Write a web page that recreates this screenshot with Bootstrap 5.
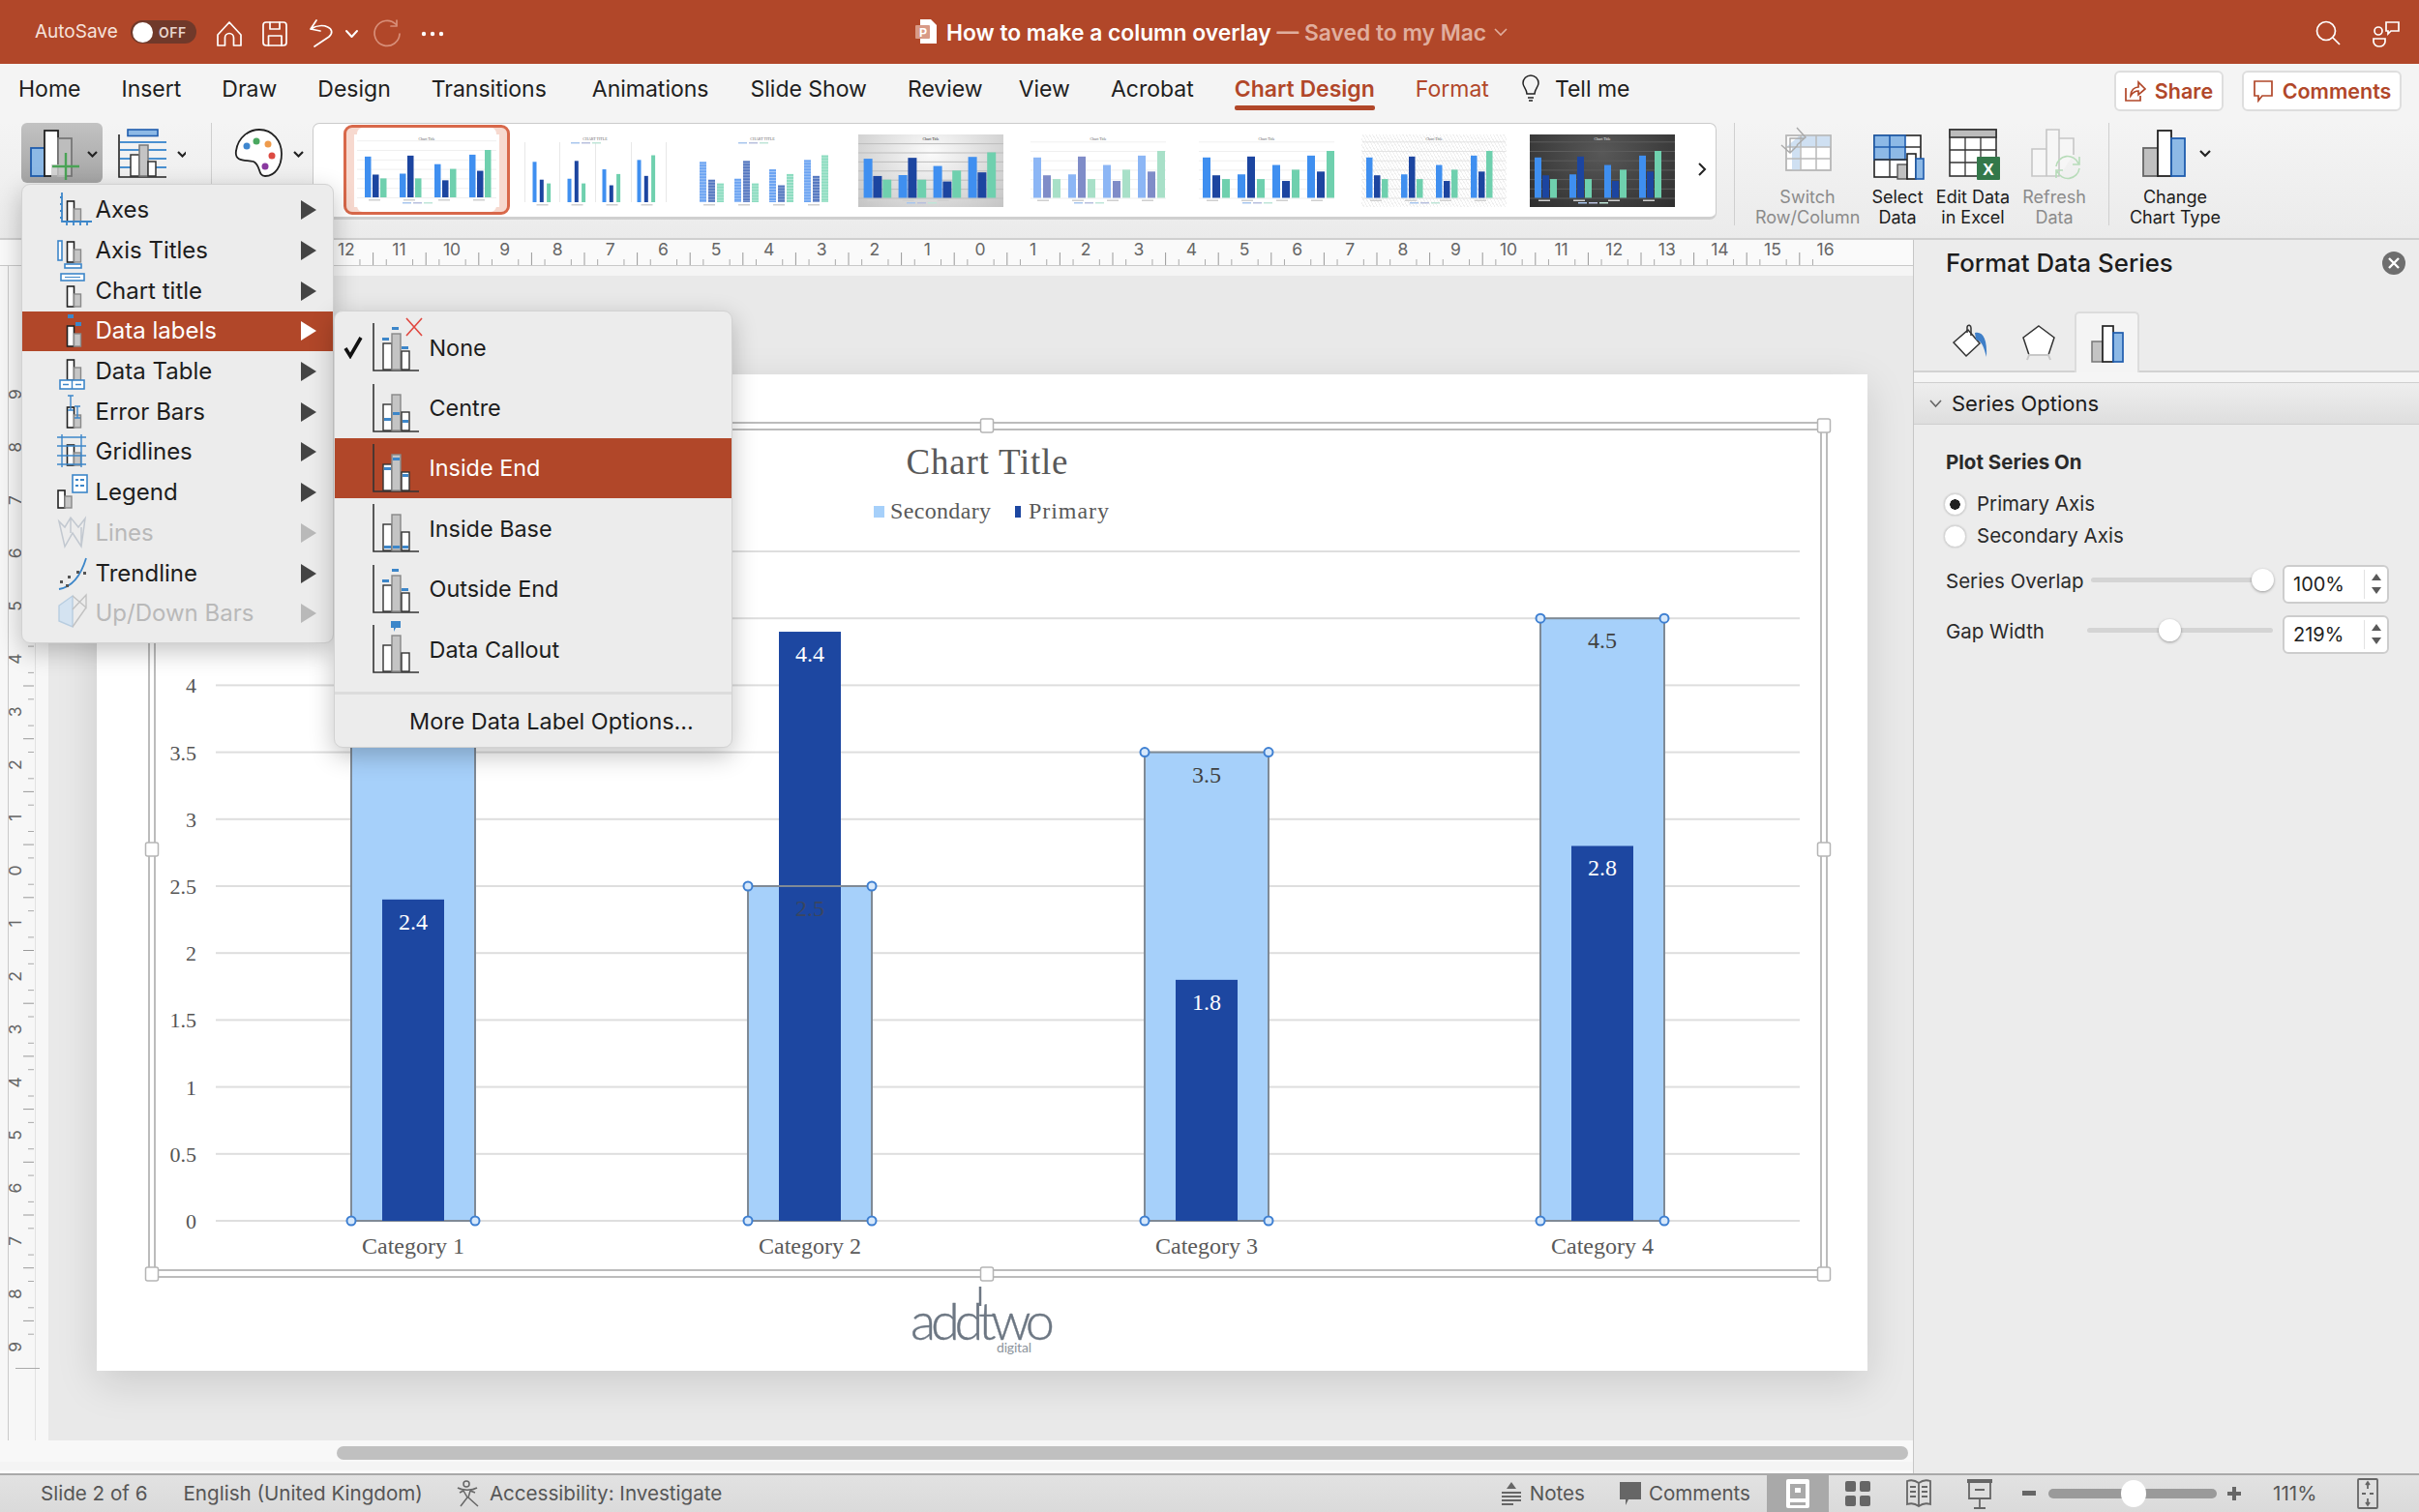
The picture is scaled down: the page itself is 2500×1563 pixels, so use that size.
<!DOCTYPE html>
<html lang="en">
<head>
<meta charset="UTF-8">
<title>How to make a column overlay</title>
<link href="https://cdn.jsdelivr.net/npm/bootstrap@5.3.0/dist/css/bootstrap.min.css" rel="stylesheet">
<style>
  body { margin: 0; background: #ececec; font-family: Inter, "Liberation Sans", sans-serif; color: #1c1c1c; }
  .app { width: 2500px; height: 1563px; overflow: hidden; position: relative; }
  svg { display: block; }

  /* title bar */
  .title-bar { height: 66px; background: #b14729; color: #fff; flex: none; }
  .auto-save { margin-left: 36px; width: 99px; font-size: 19px; color: #f6e3dc; }
  .off-toggle { width: 68px; height: 24px; border-radius: 12px; background: #70392a; padding-left: 2px; font-size: 14px; font-weight: 600; letter-spacing: .5px; color: #e9d5ce; gap: 6px; }
  .off-knob { width: 21px; height: 21px; border-radius: 50%; background: #fff; }
  .doc-icon { margin-left: 482px; }
  .doc-title { margin-left: 8px; padding-top: 3px; font-size: 22.8px; font-weight: 600; white-space: nowrap; }
  .doc-saved { color: #e0ae9e; }

  /* tabs */
  .tab-row { height: 60px; background: #f4f4f4; flex: none; padding-left: 19px; gap: 42px; }
  .tab-row .nav-link { padding: 0; color: #1e1e1e; font-size: 23px; height: 52px; line-height: 52px; position: relative; }
  .tab-row .tab-hot { color: #b14729; }
  .tab-row .tab-on { font-weight: 600; color: #b14729; }
  .tab-on::after { content: ""; position: absolute; left: 0; right: 0; top: 43px; height: 5px; border-radius: 2px; background: #b14729; }
  .tab-row .tab-anim { margin-left: 5px; }
  .tab-row .tab-show { margin-left: 1px; }
  .tab-row .tab-view { margin-left: -5px; }
  .tab-row .tell-me { margin-left: -10px; gap: 14px; }
  .top-btn { height: 42px; background: #fff; border: 2px solid #dedede; border-radius: 6px; color: #b14729; font-size: 21.5px; font-weight: 600; gap: 9px; margin-top: 7px; text-decoration: none; }
  .share-btn { width: 113px; }
  .comment-btn { width: 165px; }

  /* ribbon */
  .ribbon { height: 122px; flex: none; padding: 1px 0 0 22px; background: linear-gradient(#f4f4f4, #ebebeb); border-bottom: 2px solid #cfcfcf; }
  .add-btn { background: linear-gradient(#c2c2c2, #a5a5a5); border-radius: 6px; }
  .rb-sep { width: 1px; height: 106px; background: #cfcfcf; flex: none; }
  .gallery { width: 1451px; height: 100px; background: #fff; border: 1px solid #cbcbcb; border-bottom: 3px solid #cfcfcf; border-radius: 7px; padding-left: 42px; gap: 23.5px; flex: none; position: relative; }
  .thumb-wrap { width: 150px; height: 75px; position: relative; }
  .thumb-wrap svg { position: relative; background: #fff; }
  .thumb-on::before { content: ""; position: absolute; left: -11px; right: -11px; top: -10px; bottom: -8px; border: 3px solid #d8684a; border-radius: 9px; background: #fff; box-shadow: inset 11px 0 0 #f7d9cf, inset -11px 0 0 #f7d9cf; }
  .gal-next { position: absolute; right: 9px; top: 39px; }
  .rb-btn { font-size: 18px; line-height: 21px; text-align: center; flex: none; white-space: nowrap; }
  .rb-off { color: #8b8b8b; }

  /* work area */
  .h-ruler { background: #fafafa; flex: none; overflow: visible; }
  .canvas-col { width: 1978px; border-right: 1px solid #c6c6c6; flex: none; }
  .stage { background: #e9e9e9; border-top: 10px solid #f5f5f5; padding: 102px 0 0 50px; }
  .slide-sheet { width: 1830px; height: 1030px; background: #fff; box-shadow: 0 12px 40px rgba(0, 0, 0, .13); }
  .v-ruler { background: #f7f7f7; flex: none; }
  .scroll-row { height: 34px; flex: none; background: #f8f8f8; padding: 6px 5px 0 348px; border-bottom: 3px solid #fbfbfb; box-shadow: inset 0 -9px 0 #f4f4f4, inset 0 -8px 0 #d6d6d6; }
  .scroll-thumb { height: 14px; border-radius: 7px; background: #c0c0c0; width: 100%; }

  /* dropdowns */
  .chart-menu { --bs-dropdown-padding-y: 0; display: block; background: #ececec; border: 1px solid #d2d2d2; border-radius: 9px; box-shadow: 0 8px 26px rgba(0, 0, 0, .24); min-width: 0; margin: 0; z-index: 5; }
  .main-menu { left: 22px; top: 190px; width: 323px; padding: 5.5px 0 8.5px; }
  .sub-menu { left: 345px; top: 321px; width: 412px; padding: 6px 0 0; height: 452px; z-index: 6; }
  .chart-menu .dropdown-item { font-size: 24px; color: #1d1d1d; padding: 0; display: flex; align-items: center; }
  .main-menu .dropdown-item { height: 41.7px; }
  .main-menu .dropdown-item svg { margin-left: 36px; margin-right: -1.5px; width: 41px; height: 40px; flex: none; overflow: visible; }
  .sub-menu .dropdown-item { height: 62.4px; font-size: 23.4px; }
  .sub-menu .dropdown-item svg.mark-slot { margin-left: 9px; width: 21px; height: 24px; flex: none; }
  .sub-menu .dropdown-item svg.bars-slot { margin-left: 9px; margin-right: 8.5px; width: 50px; height: 50px; flex: none; overflow: visible; }
  .sub-menu .mark-gap { width: 30px; flex: none; }
  .chart-menu .item-hot, .chart-menu .item-hot:hover { background: #b14729; color: #fff; }
  .chart-menu .item-off { color: #b9b9b9; }
  .menu-arrow { margin-left: auto; margin-right: 17px; width: 0; height: 0; border-left: 16px solid #444; border-top: 10px solid transparent; border-bottom: 10px solid transparent; }
  .item-hot .menu-arrow { border-left-color: #fff; }
  .item-off .menu-arrow { border-left-color: #b9b9b9; }
  .sub-menu .dropdown-divider { margin: 13px 0 0; border-top: 3px solid #dcdcdc; opacity: 1; }
  .sub-menu .more-item { padding-left: 77px; height: 55px; }

  /* format pane */
  .format-pane { background: #ececec; }
  .pane-head { height: 48px; padding: 0 14px 0 33px; font-size: 25.8px; font-weight: 500; flex: none; }
  .pane-close { width: 24px; height: 24px; border-radius: 50%; background: #6e6e6e; }
  .pane-tabs { height: 89px; border-bottom: 2px solid #d2d2d2; flex: none; padding: 26px 0 0 24px; gap: 4px; }
  .pane-tab { width: 67px; height: 63px; display: flex; align-items: center; justify-content: center; }
  .pane-tab-on { background: #f4f4f4; border: 2px solid #dcdcdc; border-bottom: none; border-radius: 5px 5px 0 0; }
  .pane-strip { height: 10px; background: #f5f5f5; flex: none; }
  .pane-sect { height: 44px; background: linear-gradient(#eeeeee, #dedede); border-top: 1px solid #cfcfcf; border-bottom: 1px solid #cfcfcf; padding-left: 16px; gap: 10px; font-size: 22px; flex: none; }
  .pane-body { padding: 24px 0 0 33px; font-size: 20.5px; color: #2a2a2a; }
  .plot-head { font-weight: 700; line-height: 30px; margin-bottom: 11.5px; }
  .radio-row { height: 33px; gap: 11px; margin-left: -2px; }
  .radio-row .form-check-input { width: 23px; height: 23px; margin: 0; background-color: #fff; border: 1px solid #d4d4d4; box-shadow: 0 0 2px rgba(0, 0, 0, .2); flex: none; }
  .radio-row .form-check-input:checked { background-color: #fff; border-color: #d4d4d4; background-image: radial-gradient(circle, #222 0 5px, transparent 5.5px); }
  .slide-row { height: 52px; }
  .overlap-row { margin-top: 5px; }
  .overlap-row .slide-name { width: 150px; }
  .gap-row .slide-name { width: 146px; }
  .slide-name { flex: none; }
  .slide-track { height: 5px; border-radius: 3px; background: #d4d4d4; position: relative; margin-top: -4px; }
  .slide-knob { position: absolute; top: -9px; width: 23px; height: 23px; border-radius: 50%; background: #fff; box-shadow: 0 1px 3px rgba(0, 0, 0, .35); }
  .spin-box { width: 110px; height: 40px; background: #fff; border: 2px solid #cdcdcd; border-radius: 6px; padding-left: 9px; font-size: 20px; color: #222; flex: none; margin: 4px 31px 0 auto; }
  .spin-arrows { margin-left: auto; width: 24px; height: 30px; border-left: 1px solid #e2e2e2; gap: 7px; }
  .tri-up { width: 0; height: 0; border: 5px solid transparent; border-top: 0; border-bottom: 7px solid #5a5a5a; }
  .tri-down { width: 0; height: 0; border: 5px solid transparent; border-bottom: 0; border-top: 7px solid #5a5a5a; }

  /* status bar */
  .status-bar { height: 40px; flex: none; background: linear-gradient(#e2e2e2, #dadada); border-top: 2px solid #a9a9a9; font-size: 20.6px; color: #565656; }
  .status-bar > span, .status-bar > svg { flex: none; }
  .view-on { width: 64px; height: 38px; background: #a9a9a9; display: flex; align-items: center; justify-content: center; }
  .zoom-track { width: 174px; height: 10px; border-radius: 5px; background: #9a9a9a; position: relative; }
  .zoom-knob { position: absolute; top: -9px; left: 75px; width: 26px; height: 28px; border-radius: 50%; background: #fff; }
  .zoom-pct { width: 48px; white-space: nowrap; }
  .access-txt { margin-left: 9px; }
</style>
</head>
<body>
<svg width="0" height="0" style="position:absolute">
  <defs>
    <symbol id="two-bars" viewBox="0 0 41 40">
      <rect x="10.5" y="11" width="7" height="21" fill="#fff" stroke="#222" stroke-width="1.6"/>
      <rect x="17.5" y="19" width="7" height="13" fill="#c6c6c6" stroke="#8a8a8a" stroke-width="1.4"/>
    </symbol>
    <symbol id="three-bars" viewBox="0 0 50 50">
      <path d="M1 0V49H48" fill="none" stroke="#333" stroke-width="1.6"/>
      <rect x="11" y="21" width="9" height="27" fill="#fff" stroke="#333" stroke-width="1.4"/>
      <rect x="20" y="11" width="9" height="37" fill="#c4c4c4" stroke="#888" stroke-width="1.4"/>
      <rect x="30" y="29" width="8" height="19" fill="#fff" stroke="#333" stroke-width="1.4"/>
    </symbol>
  </defs>
</svg>

<div class="app d-flex flex-column">

  <!-- title bar -->
  <div class="title-bar d-flex align-items-center">
    <span class="auto-save">AutoSave</span>
    <span class="off-toggle d-flex align-items-center"><span class="off-knob"></span>OFF</span>
    <svg class="ms-3" width="245" height="36" viewBox="220 15 245 36" fill="none" stroke="#fff" stroke-width="1.7" stroke-linejoin="round" stroke-linecap="round">
      <path d="M226 36L238 23L250 36V47H242.500V39A4.500 4.500 0 0 0 233.500 39V47H226Z"/>
      <rect x="273" y="23" width="24" height="24" rx="3"/>
      <path d="M280 23V30H290V23M278.500 47V37H292V47"/>
      <path d="M328 21L322 30L332 32M322 30C335 22 350 30 341 38L326 48"/>
      <path d="M359 32L364.500 38L370 32" stroke-width="2"/>
      <path d="M410 25A13 13 0 1 0 414 35M411 21V27H405" stroke="#d88f79"/>
      <g fill="#fff" stroke="none"><circle cx="439" cy="35" r="2.200"/><circle cx="448" cy="35" r="2.200"/><circle cx="457" cy="35" r="2.200"/></g>
    </svg>
    <svg class="doc-icon" width="24" height="28" viewBox="945 21 24 28">
      <path d="M950 22H961L967 28V47H950Z" fill="#fff"/>
      <rect x="945" y="28" width="15" height="14" rx="1" fill="#d89a86"/>
      <text x="949" y="40" font-size="12" font-weight="700" fill="#fff" font-family="Liberation Sans, sans-serif">P</text>
    </svg>
    <span class="doc-title">How to make a column overlay <span class="doc-saved">— Saved to my Mac</span></span>
    <svg class="ms-2" width="14" height="10" viewBox="0 0 14 10" fill="none" stroke="#e0ae9e" stroke-width="1.600"><path d="M1 2L7 8L13 2"/></svg>
    <svg class="ms-auto" width="100" height="36" viewBox="2388 16 100 36" fill="none" stroke="#fff" stroke-width="1.700" style="margin-right:12px">
      <circle cx="2404" cy="33" r="9.500"/><path d="M2411 40L2418 47"/>
      <circle cx="2458" cy="33" r="4"/><path d="M2453 41H2465V44A6 5 0 0 1 2453 44Z"/><path d="M2466 24H2479V33H2471L2468 36V33H2466Z"/>
    </svg>
  </div>

  <!-- tabs -->
  <nav class="nav tab-row">
    <a class="nav-link">Home</a><a class="nav-link">Insert</a><a class="nav-link">Draw</a><a class="nav-link">Design</a><a class="nav-link">Transitions</a><a class="nav-link tab-anim">Animations</a><a class="nav-link tab-show">Slide Show</a><a class="nav-link">Review</a><a class="nav-link tab-view">View</a><a class="nav-link">Acrobat</a><a class="nav-link tab-on">Chart Design</a><a class="nav-link tab-hot">Format</a>
    <a class="nav-link d-flex align-items-center tell-me">
      <svg width="22" height="30" viewBox="0 0 22 30" fill="none" stroke="#222" stroke-width="1.500"><path d="M7 20C7 15 3 13 3 9A8 8 0 0 1 19 9C19 13 15 15 15 20Z"/><path d="M8 24H14M9 27H13"/></svg>
      Tell me
    </a>
    <div class="ms-auto d-flex" style="gap:19px;padding-right:18px">
      <a class="top-btn share-btn d-flex align-items-center justify-content-center">
        <svg width="22" height="22" viewBox="0 0 22 22" fill="none" stroke="#b14729" stroke-width="1.700"><path d="M1 8V21H16V16"/><path d="M6 16C6 10 10 7 14 7V2L21 9L14 15V11C10 11 8 13 6 16Z"/></svg>Share
      </a>
      <a class="top-btn comment-btn d-flex align-items-center justify-content-center">
        <svg width="22" height="24" viewBox="0 0 22 24" fill="none" stroke="#b14729" stroke-width="1.700"><path d="M2 2H20V17H10L6 22V17H2Z"/></svg>Comments
      </a>
    </div>
  </nav>

  <!-- ribbon -->
  <div class="ribbon d-flex align-items-start">
    <svg class="add-btn" width="84" height="62" viewBox="22 127 84 62" fill="none">
      <rect x="32" y="153" width="14" height="29" fill="#8db9e6" stroke="#1f5cad" stroke-width="1.800"/>
      <rect x="46" y="135" width="14" height="47" fill="#fff" stroke="#222" stroke-width="1.800"/>
      <rect x="60" y="143" width="14" height="39" fill="#bdbdbd" stroke="#777" stroke-width="1.800"/>
      <rect x="53" y="170" width="15" height="13" fill="#c9c9c9" opacity=".8"/>
      <path d="M54 172H82M68 158V186" stroke="#4aa356" stroke-width="2.400"/>
      <path d="M91 157L95.500 161.500L100 157" stroke="#222" stroke-width="2.200"/>
    </svg>
    <svg style="margin-left:12px" width="74" height="62" viewBox="118 127 74 62" fill="none">
      <rect x="132" y="134" width="31" height="6.500" fill="#8db9e6" stroke="#1f5cad" stroke-width="1.600"/>
      <path d="M123 139V183H172" stroke="#222" stroke-width="1.600"/>
      <path d="M124 147H172M124 155H172M124 164H172M124 173H172" stroke="#4a90d0" stroke-width="1.800"/>
      <rect x="135" y="160" width="9" height="22" fill="#fff" stroke="#333" stroke-width="1.500"/>
      <rect x="144" y="150" width="9" height="32" fill="#c4c4c4" stroke="#777" stroke-width="1.500"/>
      <rect x="153" y="167" width="8" height="15" fill="#fff" stroke="#333" stroke-width="1.500"/>
      <path d="M184 157L188.500 161.500L193 157" stroke="#222" stroke-width="2.200"/>
    </svg>
    <div class="rb-sep" style="margin-left:26px"></div>
    <svg style="margin-left:17px" width="82" height="62" viewBox="236 127 82 62" fill="none">
      <path d="M244 156C246 141 258 134 268 134C282 134 291 146 291 159C291 171 285 182 274 182C266 182 270 171 262 167C255 165 242 168 244 156Z" fill="#fff" stroke="#222" stroke-width="1.800"/>
      <circle cx="255" cy="151" r="3.500" fill="#3f87cf"/><circle cx="265" cy="146" r="3.500" fill="#4aa860"/><circle cx="277" cy="149" r="3.500" fill="#ee9b4c"/><circle cx="281" cy="161" r="3.500" fill="#dc4a42"/><circle cx="274" cy="172" r="3.500" fill="#8a3aa0"/>
      <path d="M304 157L308.500 161.500L313 157" stroke="#222" stroke-width="2.200"/>
    </svg>
    <div class="gallery d-flex align-items-center" id="thumbGallery" style="margin-left:5px">
      <svg class="gal-next" width="10" height="16" viewBox="0 0 10 16" fill="none" stroke="#222" stroke-width="2"><path d="M2 2L8 8L2 14"/></svg>
    </div>
    <div class="rb-sep" style="margin-left:18px"></div>
    <div class="rb-btn rb-off" style="margin-left:21px;width:108px">
      <svg class="mx-auto" width="108" height="66" viewBox="1814 127 108 66" fill="none">
        <path d="M1846 140H1892V176H1846Z" fill="#fff" stroke="#b9b9b9" stroke-width="1.500"/>
        <path d="M1846 152H1892V140H1862L1852 152V176H1860V140" fill="#cfe0f2"/>
        <path d="M1846 152H1892M1846 164H1892M1861 140V176M1877 140V176M1846 140H1892V176H1846Z" stroke="#b9b9b9" stroke-width="1.500"/>
        <path d="M1850 158V143H1865M1857 132L1866 142L1857 150M1841 150L1850 158L1858 150" stroke="#a9a9a9" stroke-width="1.400"/>
      </svg>
      Switch<br>Row/Column
    </div>
    <div class="rb-btn" style="width:78px">
      <svg class="mx-auto" width="78" height="66" viewBox="1922 127 78 66" fill="none">
        <rect x="1937" y="140" width="48" height="43" fill="#fff" stroke="#222" stroke-width="1.600"/>
        <rect x="1937" y="140" width="32" height="25" fill="#8db9e6" stroke="#1f5cad" stroke-width="1.600"/>
        <path d="M1953 140V165M1937 152H1969" stroke="#1f5cad" stroke-width="1.600"/>
        <path d="M1937 165H1985M1969 152H1985M1953 165V183" stroke="#333" stroke-width="1.400"/>
        <rect x="1961" y="170" width="10" height="15" fill="#c0c0c0" stroke="#555" stroke-width="1.400"/>
        <rect x="1971" y="159" width="9" height="26" fill="#fff" stroke="#222" stroke-width="1.600"/>
        <rect x="1980" y="164" width="8" height="21" fill="#8db9e6" stroke="#1f5cad" stroke-width="1.600"/>
      </svg>
      Select<br>Data
    </div>
    <div class="rb-btn" style="width:78px">
      <svg class="mx-auto" width="78" height="66" viewBox="2000 127 78 66" fill="none">
        <rect x="2015" y="134" width="48" height="48" fill="#fff" stroke="#333" stroke-width="1.600"/>
        <rect x="2015" y="134" width="48" height="8" fill="#bcbcbc" stroke="#333" stroke-width="1.600"/>
        <path d="M2015 155H2063M2015 168H2063M2031 142V182M2047 142V182" stroke="#333" stroke-width="1.300"/>
        <rect x="2043" y="162" width="24" height="24" rx="1" fill="#33784a"/>
        <text x="2055" y="181" text-anchor="middle" font-size="17" font-weight="700" fill="#fff" font-family="Liberation Sans, sans-serif">X</text>
      </svg>
      Edit Data<br>in Excel
    </div>
    <div class="rb-btn rb-off" style="width:90px">
      <svg class="mx-auto" width="90" height="66" viewBox="2078 127 90 66" fill="none">
        <path d="M2100 182V154H2115V182ZM2115 182V134H2128V182ZM2128 182V143H2143V160" stroke="#c6c6c6" stroke-width="1.600" fill="#f6f6f6"/>
        <path d="M2125 172A12 12 0 0 1 2148 169M2149 174A12 12 0 0 1 2126 177M2149 162V170H2142M2125 184V176H2132" stroke="#b7dcb9" stroke-width="1.600"/>
      </svg>
      Refresh<br>Data
    </div>
    <div class="rb-sep" style="margin-left:11px"></div>
    <div class="rb-btn" style="margin-left:10px;width:116px">
      <svg class="mx-auto" width="116" height="66" viewBox="2190 127 116 66" fill="none">
        <rect x="2215" y="153" width="15" height="29" fill="#c0c0c0" stroke="#666" stroke-width="1.800"/>
        <rect x="2230" y="135" width="14" height="47" fill="#fff" stroke="#222" stroke-width="1.800"/>
        <rect x="2244" y="143" width="14" height="39" fill="#8db9e6" stroke="#1f5cad" stroke-width="1.800"/>
        <path d="M2274 156L2279 161L2284 156" stroke="#222" stroke-width="2.200"/>
      </svg>
      Change<br>Chart Type
    </div>
  </div>

  <!-- canvas and pane -->
  <div class="d-flex flex-grow-1" style="min-height:0">
    <div class="canvas-col d-flex flex-column">
      <svg class="h-ruler" id="hRuler" width="1977" height="27" viewBox="0 248 1977 27"></svg>
      <div class="d-flex flex-grow-1" style="min-height:0">
        <svg class="v-ruler" id="vRuler" width="50" height="1214" viewBox="0 275 50 1214"></svg>
        <div class="stage flex-grow-1">
          <div class="slide-sheet">
            <svg id="chartSvg" width="1830" height="1030" viewBox="100 387 1830 1030"></svg>
          </div>
        </div>
      </div>
      <div class="scroll-row"><div class="scroll-thumb"></div></div>
    </div>

    <aside class="format-pane flex-grow-1 d-flex flex-column">
      <div class="pane-head d-flex align-items-center justify-content-between">
        Format Data Series
        <span class="pane-close d-flex align-items-center justify-content-center">
          <svg width="12" height="12" viewBox="0 0 12 12" stroke="#fff" stroke-width="2.400"><path d="M1 1L11 11M11 1L1 11"/></svg>
        </span>
      </div>
      <div class="pane-tabs d-flex">
        <div class="pane-tab">
          <svg width="40" height="38" viewBox="0 0 40 38" fill="none"><path d="M3 19L18 6L30 20L16 33Z" fill="#fff" stroke="#333" stroke-width="1.500"/><path d="M17 9V3C18 0 21 1 21 4V12" stroke="#333" stroke-width="1.500"/><path d="M25 9C33 7 38 15 37 34C34 24 33 18 26 16Z" fill="#3f7fc8"/></svg>
        </div>
        <div class="pane-tab">
          <svg width="36" height="40" viewBox="0 0 36 40" fill="none"><path d="M18 3L34 15L28 33H8L2 15Z" fill="#fff" stroke="#333" stroke-width="1.500"/><path d="M6 38L8 33H28L30 38" stroke="#c8c8c8" stroke-width="2"/></svg>
        </div>
        <div class="pane-tab pane-tab-on">
          <svg width="36" height="40" viewBox="0 0 36 40"><rect x="2" y="18" width="11" height="21" fill="#c4c4c4" stroke="#777" stroke-width="1.500"/><rect x="13" y="2" width="11" height="37" fill="#fff" stroke="#222" stroke-width="1.700"/><rect x="24" y="9" width="10" height="30" fill="#8db9e6" stroke="#1f5cad" stroke-width="1.700"/></svg>
        </div>
      </div>
      <div class="pane-strip"></div>
      <div class="pane-sect d-flex align-items-center">
        <svg width="13" height="9" viewBox="0 0 13 9" fill="none" stroke="#666" stroke-width="1.600"><path d="M1 1L6.500 7L12 1"/></svg>
        Series Options
      </div>
      <div class="pane-body">
        <div class="plot-head">Plot Series On</div>
        <label class="radio-row d-flex align-items-center"><input class="form-check-input" type="radio" name="axisPick" checked>Primary Axis</label>
        <label class="radio-row d-flex align-items-center"><input class="form-check-input" type="radio" name="axisPick">Secondary Axis</label>
        <div class="slide-row overlap-row d-flex align-items-center">
          <span class="slide-name">Series Overlap</span>
          <div class="slide-track" style="width:175px"><span class="slide-knob" style="left:166px"></span></div>
          <div class="spin-box d-flex align-items-center">100%<div class="spin-arrows d-flex flex-column align-items-center justify-content-center"><span class="tri-up"></span><span class="tri-down"></span></div></div>
        </div>
        <div class="slide-row gap-row d-flex align-items-center">
          <span class="slide-name">Gap Width</span>
          <div class="slide-track" style="width:192px"><span class="slide-knob" style="left:74px"></span></div>
          <div class="spin-box d-flex align-items-center">219%<div class="spin-arrows d-flex flex-column align-items-center justify-content-center"><span class="tri-up"></span><span class="tri-down"></span></div></div>
        </div>
      </div>
    </aside>
  </div>

  <!-- status bar -->
  <div class="status-bar d-flex align-items-center">
    <span style="margin-left:42px">Slide 2 of 6</span>
    <span style="margin-left:37px">English (United Kingdom)</span>
    <svg style="margin-left:34px" width="26" height="28" viewBox="0 0 26 28" fill="none" stroke="#666" stroke-width="1.500"><circle cx="11" cy="4" r="3"/><path d="M2 8C7 11 17 11 22 8M8 11L12 18L5 27M15 11L13 18L23 27M4 13L8 11M20 13L15 11"/></svg>
    <span class="access-txt">Accessibility: Investigate</span>
    <svg class="ms-auto" width="24" height="26" viewBox="0 0 24 26" stroke="#666" stroke-width="2"><path d="M12 1L17 8H7Z" fill="#666" stroke="none"/><path d="M2 12H22M2 16H22M2 20H22M2 24H14"/></svg>
    <span style="margin-left:7px">Notes</span>
    <svg style="margin-left:35px" width="24" height="28" viewBox="0 0 24 28"><path d="M1 2H23V20H10L7 26V20H1Z" fill="#666"/></svg>
    <span style="margin-left:7px">Comments</span>
    <div class="view-on" style="margin-left:17px"><svg width="26" height="32" viewBox="0 0 26 32"><rect x="1" y="1" width="24" height="30" rx="2" fill="#fff"/><rect x="5" y="6" width="16" height="15" fill="#a9a9a9"/><rect x="10" y="10" width="6" height="5" fill="#fff"/><rect x="5" y="25" width="16" height="3" fill="#a9a9a9"/></svg></div>
    <svg style="margin-left:16px" width="28" height="28" viewBox="0 0 28 28" fill="#666"><rect x="1" y="1" width="11" height="11" rx="2"/><rect x="16" y="1" width="11" height="11" rx="2"/><rect x="1" y="16" width="11" height="11" rx="2"/><rect x="16" y="16" width="11" height="11" rx="2"/></svg>
    <svg style="margin-left:35px" width="28" height="30" viewBox="0 0 28 30" fill="none" stroke="#666" stroke-width="1.800"><path d="M14 4C10 1 5 1 2 2V26C5 25 10 25 14 28C18 25 23 25 26 26V2C23 1 18 1 14 4ZM14 4V28M5 8H11M5 13H11M5 18H11M17 8H23M17 13H23M17 18H23"/></svg>
    <svg style="margin-left:35px" width="28" height="32" viewBox="0 0 28 32" fill="none" stroke="#666" stroke-width="1.800"><path d="M1 3H27" stroke-width="4"/><path d="M3 3V21H25V3M14 21V30M8 31H20M9 12H19"/></svg>
    <svg style="margin-left:30px" width="14" height="6" viewBox="0 0 14 6"><rect width="14" height="5" fill="#666"/></svg>
    <div class="zoom-track" style="margin-left:13px"><span class="zoom-knob"></span></div>
    <svg style="margin-left:11px" width="14" height="14" viewBox="0 0 14 14" fill="#666"><rect y="5" width="14" height="4"/><rect x="5" width="4" height="14"/></svg>
    <span class="zoom-pct" style="margin-left:33px">111%</span>
    <svg style="margin-left:38px;margin-right:41px" width="24" height="34" viewBox="0 0 24 34" fill="none" stroke="#666" stroke-width="1.800"><rect x="2" y="2" width="20" height="30" rx="1"/><path d="M12 6V12M12 22V28M6 17H10M14 17H18M10 8L12 5L14 8M10 26L12 29L14 26"/></svg>
  </div>

  <!-- add chart element menu -->
  <div class="dropdown-menu chart-menu main-menu show">
    <a class="dropdown-item"><svg viewBox="0 0 41 40"><use href="#two-bars"/><path d="M2 2V32H33M2 7H0M2 14H0M2 21H0M2 28H0M7 32V36M14 32V36M21 32V36M28 32V36" transform="translate(3 0)" fill="none" stroke="#3c86c9" stroke-width="1.800"/></svg>Axes<span class="menu-arrow"></span></a>
    <a class="dropdown-item"><svg viewBox="0 0 41 40"><use href="#two-bars"/><rect x="1" y="10" width="4" height="20" fill="#fff" stroke="#3c86c9" stroke-width="1.600"/><rect x="8" y="34" width="17" height="4" fill="#fff" stroke="#3c86c9" stroke-width="1.600"/></svg>Axis Titles<span class="menu-arrow"></span></a>
    <a class="dropdown-item"><svg viewBox="0 0 41 40"><use href="#two-bars" y="4"/><rect x="4" y="2" width="24" height="7" fill="#fff" stroke="#3c86c9" stroke-width="1.600"/><path d="M8 5.500H24" stroke="#3c86c9"/></svg>Chart title<span class="menu-arrow"></span></a>
    <a class="dropdown-item item-hot"><svg viewBox="0 0 41 40"><use href="#two-bars" y="4"/><rect x="11" y="3" width="6" height="4" fill="#3c86c9"/><rect x="19" y="11" width="6" height="4" fill="#3c86c9"/></svg>Data labels<span class="menu-arrow"></span></a>
    <a class="dropdown-item"><svg viewBox="0 0 41 40"><use href="#two-bars" y="-3"/><rect x="3" y="29" width="25" height="9" fill="#fff" stroke="#3c86c9" stroke-width="1.600"/><path d="M15.500 29V38M6 33.500H12M19 33.500H25" stroke="#3c86c9" stroke-width="1.400"/></svg>Data Table<span class="menu-arrow"></span></a>
    <a class="dropdown-item"><svg viewBox="0 0 41 40"><use href="#two-bars" y="4"/><path d="M14 3V18M11 3H17M11 18H17M21 14V26M18 14H24M18 26H24" stroke="#3c86c9" stroke-width="1.400" fill="none"/></svg>Error Bars<span class="menu-arrow"></span></a>
    <a class="dropdown-item"><svg viewBox="0 0 41 40"><use href="#two-bars" y="2"/><path d="M0 5H30M0 14H30M0 24H30M0 33H30M5 2V36M25 2V36" stroke="#3c86c9" stroke-width="1.400" fill="none"/></svg>Gridlines<span class="menu-arrow"></span></a>
    <a class="dropdown-item"><svg viewBox="0 0 41 40"><rect x="1" y="18" width="7" height="18" fill="#fff" stroke="#222" stroke-width="1.600"/><rect x="8" y="24" width="7" height="12" fill="#c6c6c6" stroke="#8a8a8a" stroke-width="1.400"/><rect x="16" y="2" width="15" height="18" fill="#fff" stroke="#3c86c9" stroke-width="1.600"/><path d="M19 7H22M24 7H28M19 13H22M24 13H28" stroke="#3c86c9" stroke-width="2"/></svg>Legend<span class="menu-arrow"></span></a>
    <a class="dropdown-item item-off"><svg viewBox="0 0 41 40"><path d="M2 8L8 34L16 20L25 34L29 5L22 14L14 4L8 14L2 8ZM14 4V20M25 14V34" fill="none" stroke="#c2c8d0" stroke-width="1.500"/></svg>Lines<span class="menu-arrow"></span></a>
    <a class="dropdown-item"><svg viewBox="0 0 41 40"><path d="M2 36C14 34 24 24 30 4" fill="none" stroke="#3c86c9" stroke-width="1.800"/><g fill="#555"><rect x="3" y="27" width="3" height="3"/><rect x="11" y="22" width="3" height="3"/><rect x="20" y="17" width="3" height="3"/><rect x="27" y="18" width="3" height="3"/><rect x="9" y="31" width="3" height="3"/></g></svg>Trendline<span class="menu-arrow"></span></a>
    <a class="dropdown-item item-off"><svg viewBox="0 0 41 40"><path d="M2 12L16 2V34L2 28Z" fill="#d4e3f1" stroke="#b8cde0" stroke-width="1.400"/><path d="M16 2L30 14V1L16 16M16 34L30 14" fill="none" stroke="#c2c2c2" stroke-width="1.400"/></svg>Up/Down Bars<span class="menu-arrow"></span></a>
  </div>

  <!-- data labels submenu -->
  <div class="dropdown-menu chart-menu sub-menu show">
    <a class="dropdown-item">
      <svg class="mark-slot" viewBox="0 0 21 24"><path d="M2 13L7 21L18 2" fill="none" stroke="#111" stroke-width="3.600"/></svg>
      <svg class="bars-slot" viewBox="0 0 50 50"><use href="#three-bars"/><g fill="#3c86c9"><rect x="10" y="15" width="7" height="3"/><rect x="20" y="4" width="7" height="3"/><rect x="30" y="24" width="7" height="3"/></g><path d="M35 -5L51 13M51 -5L35 13" stroke="#e0473f" stroke-width="1.600"/></svg>
      None
    </a>
    <a class="dropdown-item">
      <span class="mark-gap"></span>
      <svg class="bars-slot" viewBox="0 0 50 50"><use href="#three-bars"/><g fill="#3c86c9"><rect x="12" y="35" width="7" height="3"/><rect x="21" y="29" width="7" height="3"/><rect x="31" y="37" width="6" height="3"/></g></svg>
      Centre
    </a>
    <a class="dropdown-item item-hot">
      <span class="mark-gap"></span>
      <svg class="bars-slot" viewBox="0 0 50 50"><use href="#three-bars"/><g fill="#3c86c9"><rect x="12" y="24" width="7" height="3"/><rect x="21" y="14" width="7" height="3"/><rect x="31" y="31" width="6" height="3"/></g></svg>
      Inside End
    </a>
    <a class="dropdown-item">
      <span class="mark-gap"></span>
      <svg class="bars-slot" viewBox="0 0 50 50"><use href="#three-bars"/><g fill="#3c86c9"><rect x="12" y="43" width="7" height="3"/><rect x="21" y="43" width="7" height="3"/><rect x="31" y="43" width="6" height="3"/></g></svg>
      Inside Base
    </a>
    <a class="dropdown-item">
      <span class="mark-gap"></span>
      <svg class="bars-slot" viewBox="0 0 50 50"><use href="#three-bars"/><g fill="#3c86c9"><rect x="10" y="15" width="7" height="3"/><rect x="20" y="4" width="7" height="3"/><rect x="30" y="24" width="7" height="3"/></g></svg>
      Outside End
    </a>
    <a class="dropdown-item">
      <span class="mark-gap"></span>
      <svg class="bars-slot" viewBox="0 0 50 50"><use href="#three-bars"/><path d="M19 -4H29V3H24L22 7V3H19Z" fill="#3c86c9"/></svg>
      Data Callout
    </a>
    <hr class="dropdown-divider">
    <a class="dropdown-item more-item">More Data Label Options...</a>
  </div>
</div>

<script src="https://cdn.jsdelivr.net/npm/bootstrap@5.3.0/dist/js/bootstrap.bundle.min.js"></script>
<script>
  // gallery thumbnails
  const sets = [[4.3, 2.4, 2], [2.5, 4.4, 2], [3.5, 1.8, 3], [4.5, 2.8, 5]];
  const palette = ['#3f8ff0', '#1c45a0', '#6fd0ae'];
  const paleSet = ['#8cb6f5', '#7f8cc8', '#a8e0c8'];

  function thumb(o) {
    let s = '<svg width="150" height="75" viewBox="0 0 150 75"' + (o.css ? ' style="background:' + o.css + '"' : '') + '>';
    for (let v = 0; v <= 6 && o.grid; v++) {
      const y = o.base - v * o.unit;
      s += '<rect x="' + o.gx + '" y="' + y + '" width="' + (150 - 2 * o.gx) + '" height="1" fill="' + o.grid + '"/>';
    }
    if (o.vlines) [2, 38, 75, 112, 148].forEach(x => { s += '<rect x="' + x + '" y="8" width="1" height="' + (o.base - 8) + '" fill="#e8e8e8"/>'; });
    sets.forEach((g, i) => {
      g.forEach((val, j) => {
        const h = val * o.unit, x = o.x + i * 36 + j * o.step;
        s += '<rect x="' + x + '" y="' + (o.base - h) + '" width="' + o.w + '" height="' + h + '" fill="' + (o.colors || palette)[j] + '"/>';
        if (o.stripe) for (let y = o.base - h + 2; y < o.base; y += 3) s += '<rect x="' + x + '" y="' + y + '" width="' + o.w + '" height="1" fill="#fff" opacity=".4"/>';
      });
      s += '<rect x="' + (o.x + i * 36 + 4) + '" y="' + (o.base + 2) + '" width="12" height="1.500" fill="#cfcfcf"/>';
    });
    s += '<text x="75" y="6" text-anchor="middle" font-size="4" font-family="Liberation Serif, serif" fill="' + (o.tcol || '#666') + '">' + (o.caps ? 'CHART TITLE' : 'Chart Title') + '</text>';
    s += '<rect x="50" y="' + (o.legend || 70) + '" width="9" height="1.500" fill="#a8c6ee"/><rect x="61" y="' + (o.legend || 70) + '" width="9" height="1.500" fill="#b8c0de"/><rect x="72" y="' + (o.legend || 70) + '" width="9" height="1.500" fill="#bfe6d8"/>';
    return s + '</svg>';
  }

  const thumbOpts = [
    { base: 65, unit: 9.8, x: 11, step: 8, w: 6.5, grid: '#efefef', gx: 3 },
    { base: 70, unit: 9.7, x: 10.5, step: 7.3, w: 4, vlines: true, caps: true, legend: 8 },
    { base: 70, unit: 9.7, x: 10, step: 9, w: 7, stripe: true, colors: ['#6ca4f2', '#5578c0', '#8cdcc0'], caps: true, legend: 8 },
    { base: 65.5, unit: 9.4, x: 5.6, step: 9.8, w: 9, css: 'radial-gradient(ellipse at 50% 25%, #fbfbfb, #c4c4c4)', grid: '#bdbdbd', gx: 0, tcol: '#222' },
    { base: 65.5, unit: 9.7, x: 8, step: 10, w: 8, colors: paleSet, grid: '#efefef', gx: 5 },
    { base: 65.5, unit: 9.7, x: 9, step: 10, w: 8, grid: '#efefef', gx: 5 },
    { base: 65.5, unit: 9.7, x: 5, step: 8, w: 6.5, grid: '#e4e4e4', gx: 1, css: 'repeating-linear-gradient(60deg, #fff 0 2px, #efefef 2px 3px)' },
    { base: 65.5, unit: 9.7, x: 5, step: 8, w: 7, grid: '#5c5c5c', gx: 0, css: 'radial-gradient(ellipse at 50% 25%, #585858, #2e2e2e)', tcol: '#eee' }
  ];
  const gallery = document.getElementById('thumbGallery');
  thumbOpts.forEach((o, i) => {
    const d = document.createElement('div');
    d.className = 'thumb-wrap' + (i === 0 ? ' thumb-on' : '');
    d.innerHTML = thumb(o);
    gallery.appendChild(d);
  });

  // rulers
  let hr = '', vr = '';
  const rulerTxt = 'font-size="17.5" fill="#666" font-family="Inter, Liberation Sans, sans-serif"';
  const zeroX = 1013, zeroY = 900, inch = 54.6;
  for (let n = -12; n <= 16; n++) {
    const x = zeroX + n * inch;
    hr += '<text x="' + x + '" y="264" text-anchor="middle" ' + rulerTxt + '>' + Math.abs(n) + '</text>';
    if (n < 16) {
      hr += '<rect x="' + (x + inch / 2) + '" y="261" width="1" height="13" fill="#999"/>';
      [1, 3].forEach(q => { hr += '<rect x="' + (x + q * inch / 4) + '" y="268" width="1" height="6" fill="#aaa"/>'; });
    }
  }
  hr += '<rect x="0" y="274" width="1977" height="1" fill="#c9c9c9"/>';
  document.getElementById('hRuler').innerHTML = hr;

  for (let n = -9; n <= 9; n++) {
    const y = zeroY + n * 54.7;
    vr += '<text transform="translate(22 ' + y + ') rotate(-90)" text-anchor="middle" ' + rulerTxt + '>' + Math.abs(n) + '</text>';
    if (n < 9) {
      vr += '<rect x="24" y="' + (y + 27.3) + '" width="11" height="1" fill="#999"/>';
      [1, 3].forEach(q => { vr += '<rect x="29" y="' + (y + q * 13.7) + '" width="6" height="1" fill="#aaa"/>'; });
    }
  }
  vr += '<rect x="8" y="275" width="1" height="1214" fill="#c9c9c9"/><rect x="36" y="275" width="1" height="1214" fill="#e2e2e2"/><rect x="16" y="1414" width="25" height="1" fill="#aaa"/>';
  document.getElementById('vRuler').innerHTML = vr;

  // chart
  const baseY = 1262, perUnit = 138.4;
  const cats = [
    { cx: 427, sec: 4.3, pri: 2.4, label: 'Category 1' },
    { cx: 837, sec: 2.5, pri: 4.4, label: 'Category 2' },
    { cx: 1247, sec: 3.5, pri: 1.8, label: 'Category 3' },
    { cx: 1656, sec: 4.5, pri: 2.8, label: 'Category 4' }
  ];
  const serif = 'font-family="Liberation Serif, serif"';
  let ch = '';

  // selection frame of the chart
  ch += '<path d="M154 437H1888V1313H154ZM160 444H1882V1320H160Z" fill="none" stroke="#bcbcbc" stroke-width="2"/>';

  for (let v = 0; v <= 10; v++) {
    const y = baseY - v * perUnit / 2;
    ch += '<rect x="223" y="' + (y - 1) + '" width="1637" height="2" fill="#dedede"/>';
    if (v < 9) ch += '<text x="203" y="' + (y + 8) + '" text-anchor="end" font-size="22" fill="#555" ' + serif + '>' + (v / 2) + '</text>';
  }

  ch += '<text x="1020" y="490" text-anchor="middle" font-size="37" textLength="167" fill="#595959" ' + serif + '>Chart Title</text>';
  ch += '<rect x="903" y="523" width="11" height="12" fill="#a6d0fa"/>';
  ch += '<text x="920" y="536" font-size="24" textLength="104" fill="#595959" ' + serif + '>Secondary</text>';
  ch += '<rect x="1049" y="523" width="6" height="12" fill="#1d47a1"/>';
  ch += '<text x="1063" y="536" font-size="24" textLength="83" fill="#595959" ' + serif + '>Primary</text>';

  const dots = [];
  cats.forEach(c => {
    const sTop = baseY - c.sec * perUnit, pTop = baseY - c.pri * perUnit;
    ch += '<rect x="' + (c.cx - 64) + '" y="' + sTop + '" width="128" height="' + (baseY - sTop) + '" fill="#a6d0fa" stroke="#7f8a96" stroke-width="2"/>';
    ch += '<text x="' + c.cx + '" y="' + (sTop + 31) + '" text-anchor="middle" font-size="24" fill="#404040" ' + serif + '>' + c.sec.toFixed(1) + '</text>';
    ch += '<rect x="' + (c.cx - 32) + '" y="' + pTop + '" width="64" height="' + (baseY - pTop) + '" fill="#1d47a1"/>';
    ch += '<text x="' + c.cx + '" y="' + (pTop + 31) + '" text-anchor="middle" font-size="24" fill="#fff" ' + serif + '>' + c.pri.toFixed(1) + '</text>';
    if (c.pri > c.sec) {
      ch += '<text x="' + c.cx + '" y="' + (sTop + 31) + '" text-anchor="middle" font-size="24" fill="#3a4660" ' + serif + '>' + c.sec.toFixed(1) + '</text>';
      ch += '<rect x="' + (c.cx - 64) + '" y="' + (sTop - 1) + '" width="128" height="2" fill="#7f8a96"/>';
    }
    ch += '<text x="' + c.cx + '" y="1296" text-anchor="middle" font-size="24" textLength="106" fill="#595959" ' + serif + '>' + c.label + '</text>';
    [[c.cx - 64, sTop], [c.cx + 64, sTop], [c.cx - 64, baseY], [c.cx + 64, baseY]].forEach(p => dots.push(p));
  });
  dots.forEach(p => { ch += '<circle cx="' + p[0] + '" cy="' + p[1] + '" r="4.500" fill="#d6e8fb" stroke="#3f80d2" stroke-width="2"/>'; });

  [[157, 440], [1020, 440], [1885, 440], [157, 878], [1885, 878], [157, 1317], [1020, 1317], [1885, 1317]].forEach(p => {
    ch += '<rect x="' + (p[0] - 6.5) + '" y="' + (p[1] - 7) + '" width="13" height="14" rx="2" fill="#fff" stroke="#b5b5b5" stroke-width="1.500"/>';
  });

  // logo
  ch += '<text x="941" y="1385" font-size="54" textLength="149" fill="#6d7783" stroke="#6d7783" stroke-width=".4" font-family="Lato, sans-serif" font-weight="300">addtwo</text>';
  ch += '<path d="M1013 1330V1350" stroke="#6d7783" stroke-width="2.500"/>';
  ch += '<text x="1030" y="1398" font-size="14" textLength="36" fill="#8b939c" font-family="Lato, sans-serif">digital</text>';
  document.getElementById('chartSvg').innerHTML = ch;
</script>
</body>
</html>
